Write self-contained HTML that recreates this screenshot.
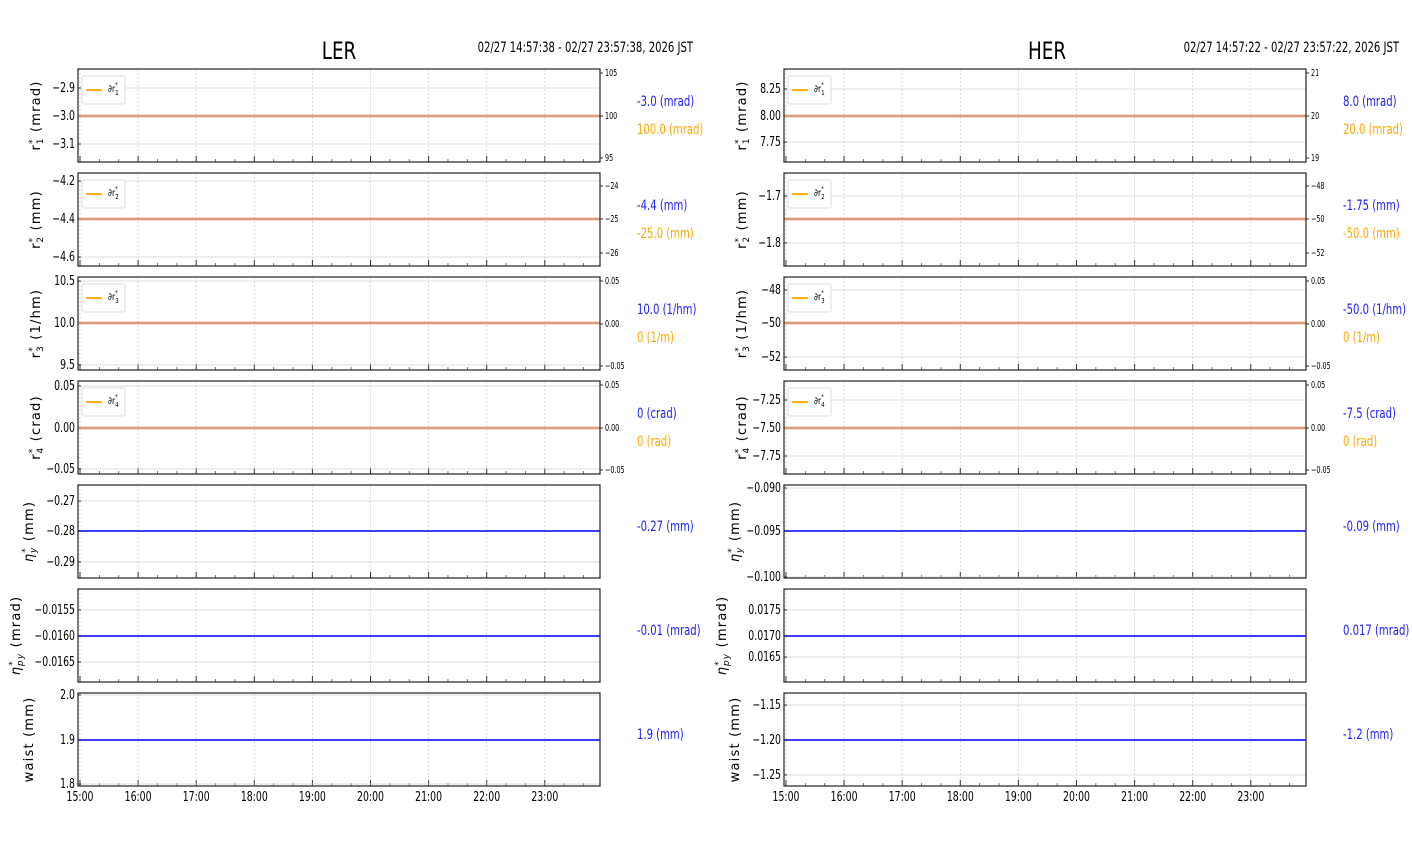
<!DOCTYPE html>
<html><head><meta charset="utf-8"><style>
html,body{margin:0;padding:0;background:#fff;width:1412px;height:864px;overflow:hidden}
svg text{font-family:"DejaVu Sans Condensed","Liberation Sans Narrow","Liberation Sans",sans-serif}
</style></head><body>
<svg id="s" width="1412" height="864" xmlns="http://www.w3.org/2000/svg"></svg>
<script>
var S=document.getElementById('s'),h='';
function t(x,y,s,o){o=o||{};var tr=o.tr||'';if(o.sx){tr='translate('+x+' '+y+') scale('+o.sx+' 1)';x=0;y=0;}
h+='<text x="'+x+'" y="'+y+'" font-size="'+(o.fs||12)+'" fill="'+(o.c||'#000')+'" text-anchor="'+(o.a||'start')+'"'+(tr?' transform="'+tr+'"':'')+(o.ls?' letter-spacing="'+o.ls+'"':'')+(o.ff?' style="font-family:'+o.ff+'"':'')+'>'+s+'</text>';}
function L(x1,y1,x2,y2,c,w,d){h+='<line x1="'+x1+'" y1="'+y1+'" x2="'+x2+'" y2="'+y2+'" stroke="'+c+'" stroke-width="'+(w||1)+'"'+(d?' stroke-dasharray="'+d+'"':'')+'/>';}
var tops=[69,173,277,381,485,589,693],H=93,SX=0.8;
var sides=[
{x0:78,title:'LER',tx:339,date:'02/27 14:57:38 - 02/27 23:57:38, 2026 JST',dx:693,
 p:[[['−2.9',88],['−3.0',116],['−3.1',144]],[['−4.2',181],['−4.4',219],['−4.6',257]],[['10.5',281],['10.0',323],['9.5',365]],[['0.05',386],['0.00',428],['−0.05',469]],[['−0.27',501],['−0.28',531],['−0.29',562]],[['−0.0155',610],['−0.0160',636],['−0.0165',662]],[['2.0',695],['1.9',740],['1.8',784]]],
 r:[[['105',73],['100',116],['95',158]],[['−24',186],['−25',219],['−26',253]],[['0.05',281],['0.00',324],['−0.05',366]],[['0.05',385],['0.00',428],['−0.05',470]]],
 v:[['-3.0 (mrad)','100.0 (mrad)'],['-4.4 (mm)','-25.0 (mm)'],['10.0 (1/hm)','0 (1/m)'],['0 (crad)','0 (rad)'],['-0.27 (mm)'],['-0.01 (mrad)'],['1.9 (mm)']]},
{x0:784,title:'HER',tx:1047,date:'02/27 14:57:22 - 02/27 23:57:22, 2026 JST',dx:1399,
 p:[[['8.25',89],['8.00',116],['7.75',142]],[['−1.7',196],['−1.8',243]],[['−48',290],['−50',323],['−52',357]],[['−7.25',400],['−7.50',428],['−7.75',456]],[['−0.090',488],['−0.095',531],['−0.100',577]],[['0.0175',610],['0.0170',636],['0.0165',657]],[['−1.15',705],['−1.20',740],['−1.25',775]]],
 r:[[['21',73],['20',116],['19',158]],[['−48',186],['−50',219],['−52',253]],[['0.05',281],['0.00',324],['−0.05',366]],[['0.05',385],['0.00',428],['−0.05',470]]],
 v:[['8.0 (mrad)','20.0 (mrad)'],['-1.75 (mm)','-50.0 (mm)'],['-50.0 (1/hm)','0 (1/m)'],['-7.5 (crad)','0 (rad)'],['-0.09 (mm)'],['0.017 (mrad)'],['-1.2 (mm)']]}];
var ylab=['r<tspan font-size="9" dy="-5">*</tspan><tspan font-size="9" dx="-6" dy="8">1</tspan><tspan dy="-3"> (mrad)</tspan>',
'r<tspan font-size="9" dy="-5">*</tspan><tspan font-size="9" dx="-6" dy="8">2</tspan><tspan dy="-3"> (mm)</tspan>',
'r<tspan font-size="9" dy="-5">*</tspan><tspan font-size="9" dx="-6" dy="8">3</tspan><tspan dy="-3"> (1/hm)</tspan>',
'r<tspan font-size="9" dy="-5">*</tspan><tspan font-size="9" dx="-6" dy="8">4</tspan><tspan dy="-3"> (crad)</tspan>',
'<tspan font-style="italic">η</tspan><tspan font-size="9" dy="-5">*</tspan><tspan font-size="9" font-style="italic" dx="-6" dy="8">y</tspan><tspan dy="-3"> (mm)</tspan>',
'<tspan font-style="italic">η</tspan><tspan font-size="9" dy="-5">*</tspan><tspan font-size="9" font-style="italic" dx="-6" dy="8">py</tspan><tspan dy="-3"> (mrad)</tspan>',
'waist (mm)'];
sides.forEach(function(sd){
 var x0=sd.x0,W=522,x1=x0+W;
 t(sd.tx,59,sd.title,{fs:24,a:'middle',sx:0.85});
 t(sd.dx,52,sd.date,{fs:14,a:'end',sx:SX});
 for(var i=0;i<7;i++){
  var y0=tops[i],y1=y0+H;
  for(var k=0;k<9;k++){var hx=x0+2+k*58.1;L(hx,y0,hx,y1,'#ccc',0.8,'2,2');
   L(hx,y1,hx,y1-6,'#333',1);
   for(var m=1;m<3;m++){var mx=hx+m*19.37;if(mx<x1)L(mx,y1,mx,y1-3,'#555',0.8);}
  }
  sd.p[i].forEach(function(tk){L(x0,tk[1],x1,tk[1],'#d0d0d0',0.8);L(x0,tk[1],x0+3,tk[1],'#333',1);t(x0-3,tk[1]+4,tk[0],{fs:13,a:'end',sx:SX});});
  var ym=sd.p[i].length==3?sd.p[i][1][1]:219;
  if(i<4){L(x0,ym,x1,ym,'#f8b890',3);L(x0,ym,x1,ym,'#a07060',0.8);
   sd.r[i].forEach(function(tk){L(x1,tk[1],x1+3,tk[1],'#333',1);t(x1+5,tk[1]+3,tk[0],{fs:9.5,sx:0.75});});
   h+='<rect x="'+(x0+4)+'" y="'+(y0+7)+'" width="43" height="28" rx="2" fill="#fff" stroke="#ddd"/>';
   L(x0+8,y0+21,x0+24,y0+21,'#ffa500',1.8);
   t(x0+30,y0+23,'∂r<tspan font-size="7" dy="-5">*</tspan><tspan font-size="7" dx="-3" dy="8">'+(i+1)+'</tspan>',{fs:10,sx:0.85});
  } else {L(x0,ym,x1,ym,'#0000ee',1.6);}
  h+='<rect x="'+x0+'" y="'+y0+'" width="'+W+'" height="'+H+'" fill="none" stroke="#222" stroke-width="1.2"/>';
  var v=sd.v[i],vy=i<4?101+i*104:(y0+41);
  t(x0+559,vy+5,v[0],{fs:14,c:'#2020ff',sx:SX});
  if(v[1])t(x0+559,vy+33,v[1],{fs:14,c:'#ffa500',sx:SX});
  var cy=y0+H/2,lx=x0-(i==5?58:(i>=4?45:38));
  t(lx,cy,ylab[i],{fs:13,a:'middle',ls:1.2,tr:'rotate(-90 '+lx+' '+cy+')',ff:'\'DejaVu Sans\',sans-serif'});
 }
 for(var k=0;k<9;k++)t(x0+2+k*58.1,801,(15+k)+':00',{fs:13,a:'middle',sx:SX});
});
S.innerHTML=h;
</script>
</body></html>
